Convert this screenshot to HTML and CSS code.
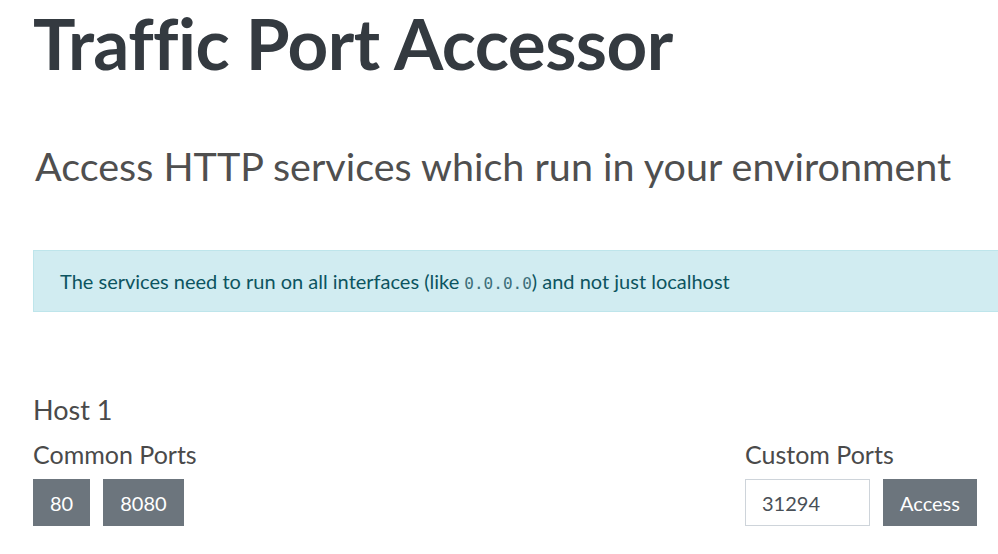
FILE: index.html
```html
<!DOCTYPE html>
<html lang="en">
<head>
<meta charset="utf-8">
<title>Traffic Port Accessor</title>
<link rel="stylesheet" href="styles.css">
</head>
<body>
<main class="page">
  <h1 class="title">Traffic Port Accessor</h1>
  <h2 class="subtitle">Access HTTP services which run in your environment</h2>
  <div class="alert"><p class="alert-text">The services need to run on all interfaces (like <code>0.0.0.0</code>) and not just localhost</p></div>
  <section class="host">
    <h3 class="host-name">Host 1</h3>
    <div class="host-grid">
      <div class="col">
        <h4 class="col-title">Common Ports</h4>
        <div class="btn-row">
          <button class="btn">80</button>
          <button class="btn">8080</button>
        </div>
      </div>
      <div class="col">
        <h4 class="col-title">Custom Ports</h4>
        <div class="btn-row">
          <input class="port-input" type="text" value="31294">
          <button class="btn btn-access">Access</button>
        </div>
      </div>
    </div>
  </section>
</main>
</body>
</html>
```
FILE: styles.css
```css
html, body {
  margin: 0;
  padding: 0;
  background: #fff;
  overflow: hidden;
}
body {
  font-family: "Lato", "Noto Sans", sans-serif;
  color: #343a40;
}
.page {
  padding-left: 33px;
  width: 1000px;
}
.title {
  margin: 0;
  padding-top: 0;
  font-size: 71px;
  font-weight: 700;
  line-height: 86px;
  color: #343a40;
  letter-spacing: -0.55px;
}
.subtitle {
  margin: 56px 0 0 2px;
  font-size: 39.5px;
  font-weight: 400;
  line-height: 48px;
  color: #4f4f4f;
}
.alert {
  margin-top: 60px;
  height: 62px;
  box-sizing: border-box;
  padding: 0 26px;
  display: flex;
  align-items: center;
  background: #d1ecf1;
  border: 1px solid #bee5eb;
  color: #0c5460;
  font-size: 20px;
}
.alert-text {
  margin: 0;
}
.alert code {
  font-family: "DejaVu Sans Mono", monospace;
  font-size: 16px;
  color: #3d6f7a;
}
.host {
  margin-top: 82px;
}
.host-name {
  margin: 0;
  font-size: 27px;
  font-weight: 400;
  line-height: 32px;
  color: #4a4a4a;
}
.host-grid {
  display: grid;
  grid-template-columns: 712px 1fr;
  margin-top: 14px;
}
.col-title {
  margin: 0;
  font-size: 25px;
  font-weight: 400;
  line-height: 28px;
  color: #4a4a4a;
}
.btn-row {
  display: flex;
  gap: 13px;
  margin-top: 11px;
}
.btn {
  height: 47px;
  border: none;
  border-radius: 0;
  background: #6c757d;
  color: #fff;
  font-family: "Lato", "Noto Sans", sans-serif;
  font-size: 20px;
  padding: 0 17px;
  margin: 0;
}
.btn-access {
  padding: 0 17px;
}
.port-input {
  width: 125px;
  height: 47px;
  box-sizing: border-box;
  border: 1px solid #ced4da;
  border-radius: 0;
  padding: 0 16px;
  font-family: "Lato", "Noto Sans", sans-serif;
  font-size: 20px;
  color: #495057;
  margin: 0;
}
```
